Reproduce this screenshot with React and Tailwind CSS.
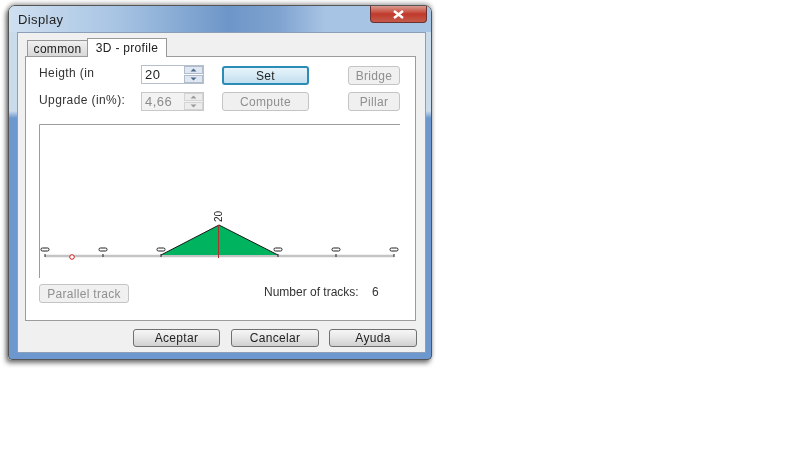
import React from 'react';

const font = "font-['Liberation_Sans',sans-serif]";

function Spinner({ value, disabled }) {
  const arrow = disabled ? '#9a9a9a' : '#4a6a8a';
  return (
    <div className={`flex w-[63px] h-[19px] border ${disabled ? 'border-[#c8c8c8] bg-[#f2f2f2] text-[#8c8c8c]' : 'border-[#b5c0cc] bg-white text-[#222]'}`}>
      <div className="flex-1 pl-[3px] text-[13px] leading-[17px] tracking-[0.5px]">{value}</div>
      <div className="w-[19px] flex flex-col gap-px">
        {[0, 1].map(i => (
          <div key={i} className={`flex-1 flex items-center justify-center border ${disabled ? 'border-[#d4d4d4] bg-[#ececec]' : 'border-[#b0bccb] bg-[#dfe8f2]'}`}>
            <svg width="7" height="4" viewBox="0 0 7 4">
              <path d={i === 0 ? 'M0.5 3.5L3.5 0.5L6.5 3.5Z' : 'M0.5 0.5L3.5 3.5L6.5 0.5Z'} fill={arrow} />
            </svg>
          </div>
        ))}
      </div>
    </div>
  );
}

function Btn({ children, className = '', disabled, primary }) {
  let look = 'border-[#707070] bg-gradient-to-b from-[#f6f6f6] via-[#e6e6e6] to-[#cfcfcf] text-[#222]';
  if (disabled) look = 'border-[#c4c4c4] bg-[#f0f0f0] text-[#8f8f8f]';
  if (primary) look = 'border-[#2b8cb5] border-2 bg-gradient-to-b from-[#e8f4fa] to-[#c2dff0] text-[#222]';
  return (
    <div className={`flex items-center justify-center border rounded-[3px] text-[12px] tracking-[0.3px] ${look} ${className}`}>
      {children}
    </div>
  );
}

function Chart() {
  const ticks = [6, 64, 122, 180, 239, 297, 355];
  return (
    <svg className="block mt-[12px] ml-[13px]" width="362" height="154" viewBox="0 0 362 154">
      <path d="M0.5 154V0.5H361" fill="none" stroke="#9c9c9c" />
      <path d="M6 132H355" stroke="#c4c4c4" strokeWidth="2.5" />
      <path d="M122 131L180 101L239 131Z" fill="#00b35f" />
      <path d="M122 131L180 101L239 131" fill="none" stroke="#1a1a1a" />
      {ticks.map(x => (
        <g key={x}>
          {x !== 180 && <rect x={x - 4} y="124" width="8" height="3" rx="1.4" fill="#fff" stroke="#222" />}
          {x !== 180 && <path d={`M${x} 130V133`} stroke="#222" />}
        </g>
      ))}
      <path d="M179.5 101V134" stroke="#b03030" />
      <circle cx="33" cy="133" r="2.3" fill="#fff" stroke="#d02020" />
      <text x="0" y="0" transform="translate(183 98) rotate(-90)" fontSize="10" fontFamily="Liberation Sans" fill="#222">20</text>
    </svg>
  );
}

export default function App() {
  return (
    <div className={`w-[800px] h-[450px] bg-white overflow-hidden ${font} blur-[0.5px]`}>
      <div className="mt-[5px] ml-2 w-[424px] h-[355px] flex flex-col rounded-t-[7px] rounded-b-[4px] border border-[#555] bg-[linear-gradient(180deg,#c9dcec_0,#c9dcec_105px,#6d98cf_112px)] shadow-[-2px_3px_5px_rgba(0,0,0,0.55),0_-2px_4px_rgba(0,0,0,0.3)]">
        <div className="h-[26px] flex justify-between shrink-0 rounded-t-[6px] bg-[linear-gradient(90deg,#cfe0f0_0,#a9c5e4_25%,#6d96c8_52%,#7fa3d0_64%,#a8c4e4_75%,#a8c4e4_100%)]">
          <div className="pl-[9px] pt-[6px] text-[13px] leading-4 text-[#222] tracking-[0.4px]">Display</div>
          <div className="mr-[4px] w-[57px] h-[17px] flex items-center justify-center rounded-b-[4px] border border-t-0 border-[#6b3030] bg-gradient-to-b from-[#d89a90] via-[#c0392b] to-[#c45a4a]">
            <svg width="13" height="9" viewBox="0 0 13 9">
              <path d="M2 1L11 8M11 1L2 8" stroke="#fff" strokeWidth="2.4" />
            </svg>
          </div>
        </div>

        <div className="ml-[8px] mr-[5px] h-[321px] flex flex-col bg-[#f0f0f0] border border-[#8ba0b8]">
          <div className="flex items-end h-[19px] ml-[9px] mt-[5px] relative z-10 -mb-px">
            <div className="w-[60px] h-[17px] flex items-center justify-center border border-[#999] border-r-0 bg-gradient-to-b from-[#f0f0f0] to-[#d8d8d8] text-[12px] tracking-[0.3px] text-[#222]">common</div>
            <div className="w-[80px] h-[19px] flex items-center justify-center border border-[#999] border-b-0 bg-white text-[12px] tracking-[0.3px] text-[#222]">3D - profile</div>
          </div>

          <div className="ml-[7px] w-[391px] h-[265px] border border-[#9c9c9c] bg-white flex flex-col">
            <div className="flex items-start mt-[8px] h-[20px]">
              <div className="ml-[13px] w-[102px] text-[12px] leading-[16px] tracking-[0.4px] text-[#333]">Heigth (in</div>
              <Spinner value="20" />
              <Btn primary className="ml-[18px] mt-px w-[87px] h-[19px]">Set</Btn>
              <Btn disabled className="ml-[39px] mt-px w-[52px] h-[19px]">Bridge</Btn>
            </div>
            <div className="flex items-start mt-[7px] h-[20px]">
              <div className="ml-[13px] w-[102px] text-[12px] leading-[16px] tracking-[0.4px] text-[#333]">Upgrade (in%):</div>
              <Spinner value="4,66" disabled />
              <Btn disabled className="ml-[18px] w-[87px] h-[19px]">Compute</Btn>
              <Btn disabled className="ml-[39px] w-[52px] h-[19px]">Pillar</Btn>
            </div>
            <Chart />
            <div className="flex items-center mt-[6px]">
              <Btn disabled className="ml-[13px] w-[90px] h-[19px]">Parallel track</Btn>
              <div className="ml-[135px] -mt-[4px] text-[12px] text-[#333] whitespace-pre">Number of tracks:    6</div>
            </div>
          </div>

          <div className="flex mt-[8px] ml-[115px]">
            <Btn className="w-[87px] h-[18px] mr-[11px]">Aceptar</Btn>
            <Btn className="w-[88px] h-[18px] mr-[10px]">Cancelar</Btn>
            <Btn className="w-[88px] h-[18px]">Ayuda</Btn>
          </div>
        </div>
      </div>
    </div>
  );
}
